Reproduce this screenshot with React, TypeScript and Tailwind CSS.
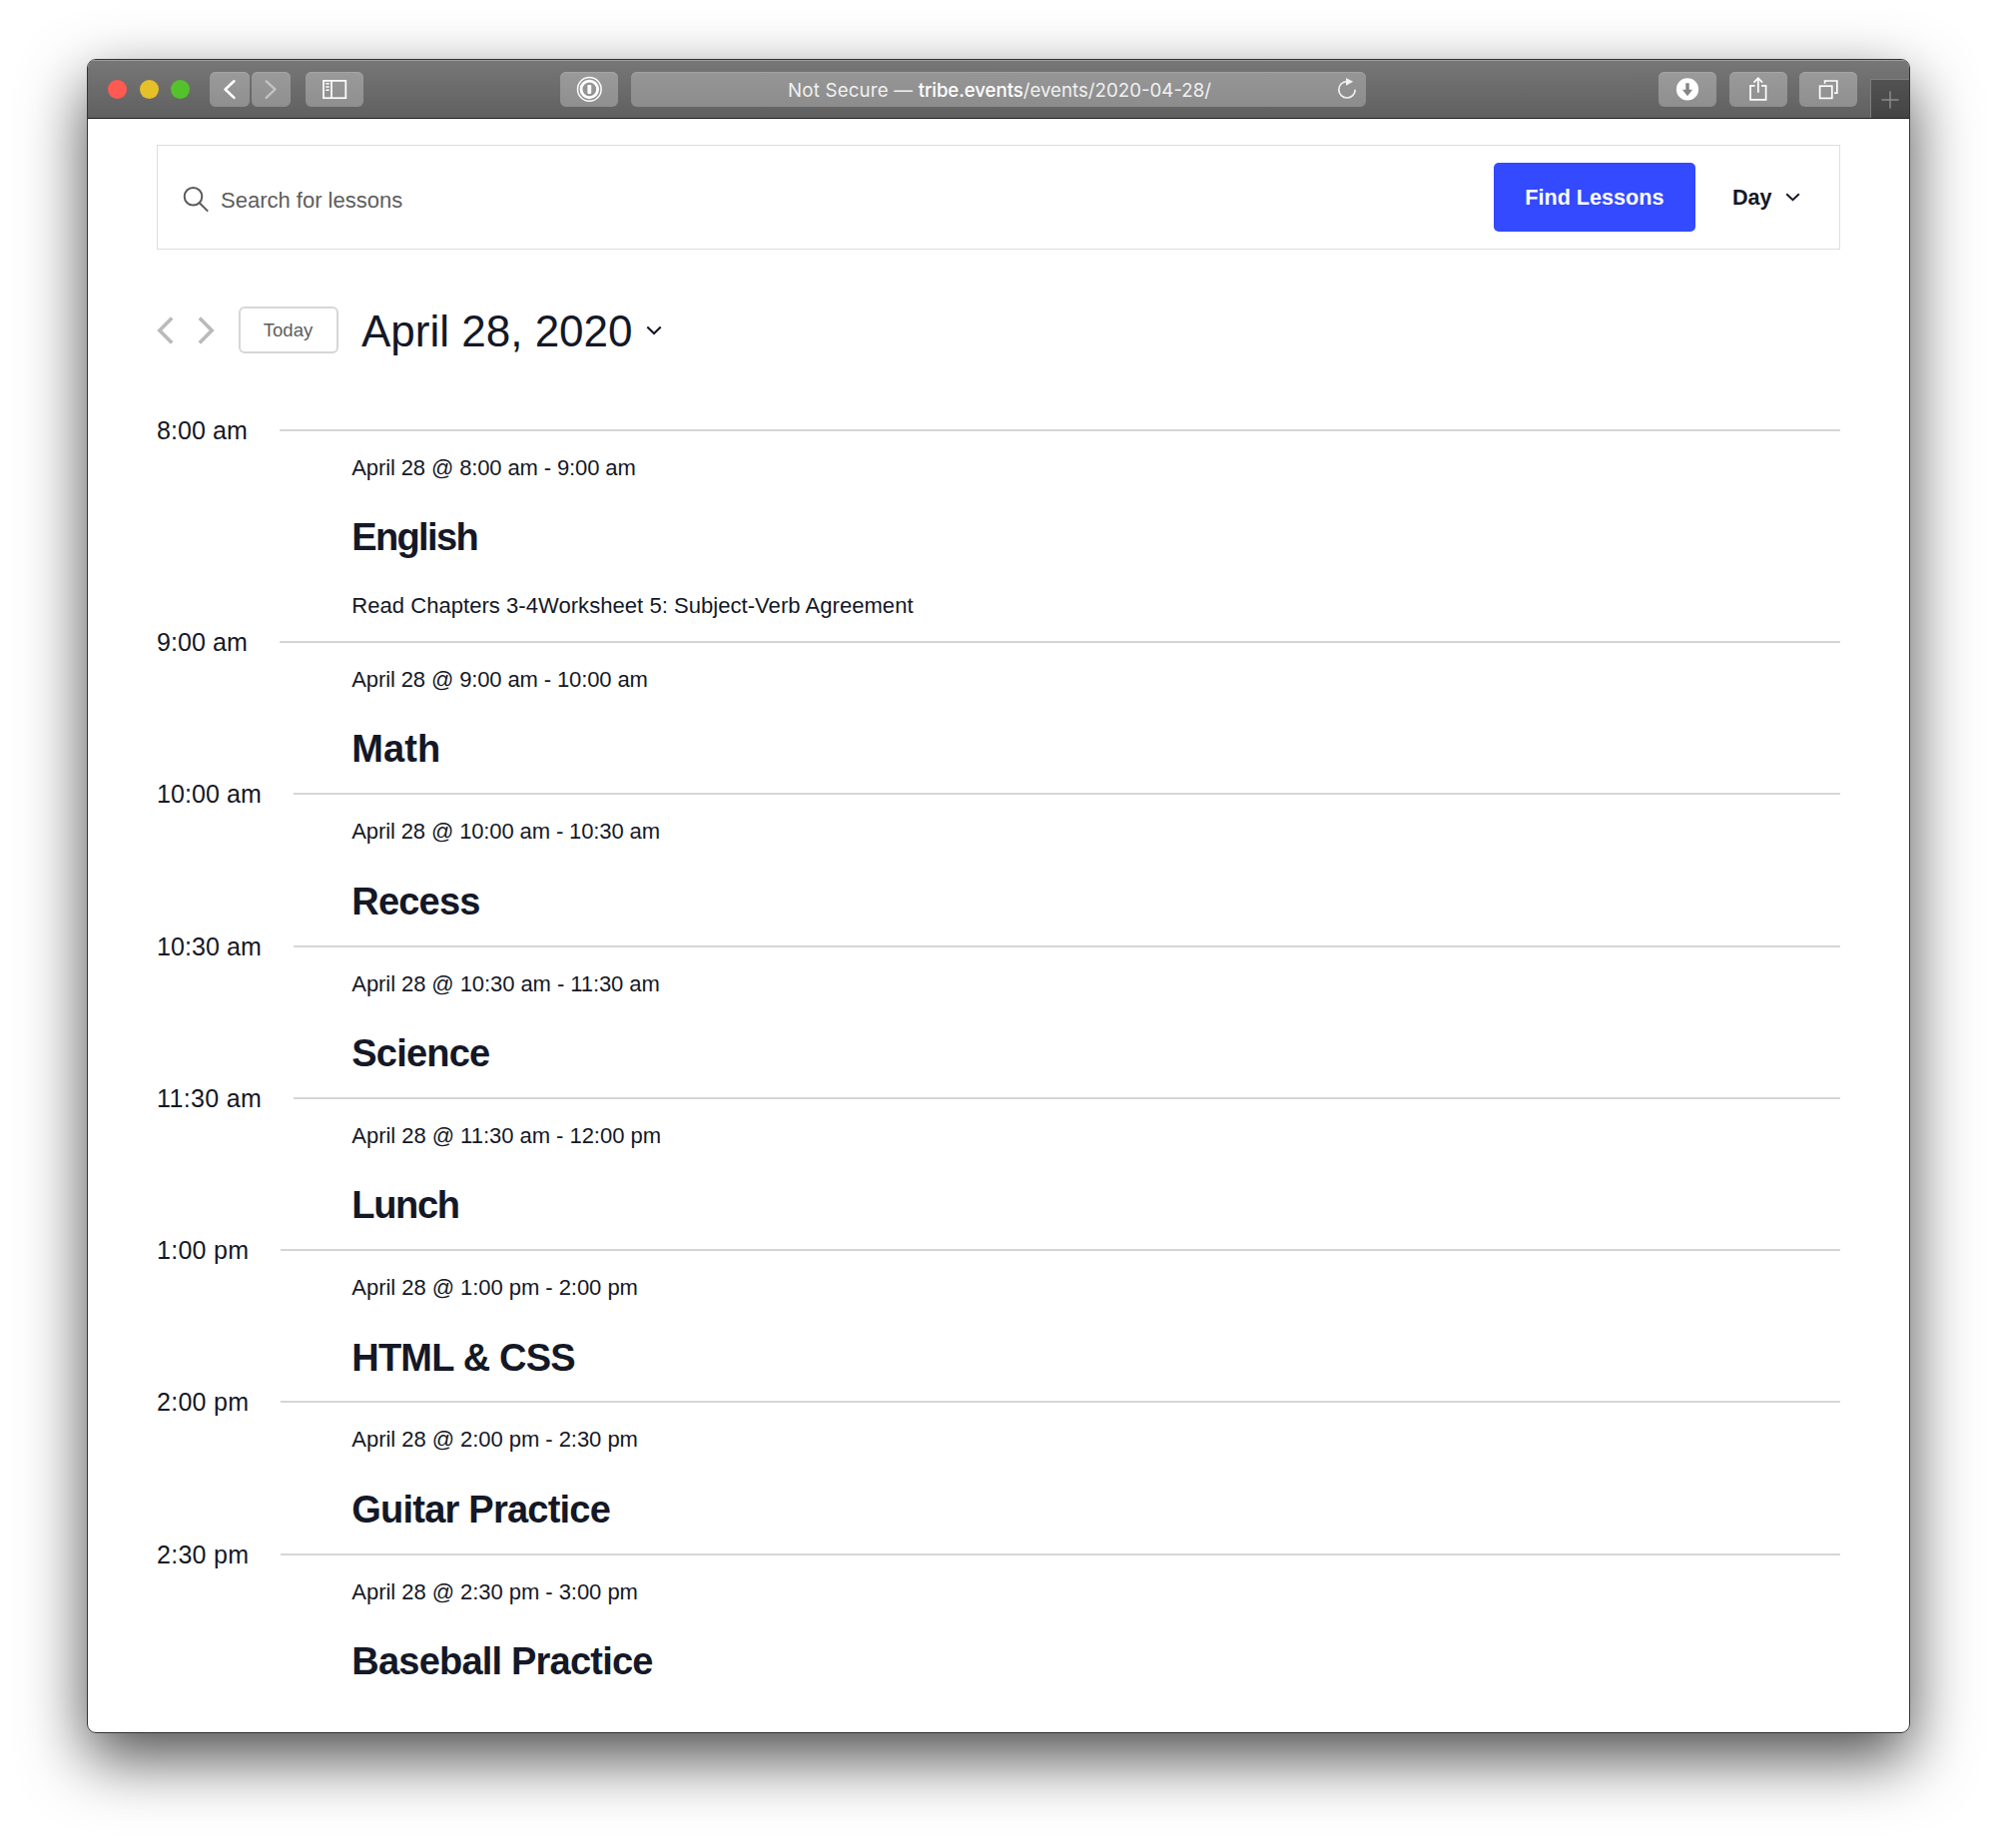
import type { ReactNode } from "react";

type Lesson = {
  hour: string;
  hourClass: string;
  time: string;
  timeClass: string;
  title: string;
  titleClass: string;
  notes?: string;
};

const lessons: Lesson[] = [
  {
    hour: "8:00 am",
    hourClass: "tracking-[0.1px]",
    time: "April 28 @ 8:00 am - 9:00 am",
    timeClass: "tracking-[-0.12px]",
    title: "English",
    titleClass: "tracking-[-1.65px]",
    notes: "Read Chapters 3-4Worksheet 5: Subject-Verb Agreement",
  },
  {
    hour: "9:00 am",
    hourClass: "tracking-[0.1px]",
    time: "April 28 @ 9:00 am - 10:00 am",
    timeClass: "tracking-[-0.12px]",
    title: "Math",
    titleClass: "tracking-[0.1px]",
  },
  {
    hour: "10:00 am",
    hourClass: "tracking-[0.1px]",
    time: "April 28 @ 10:00 am - 10:30 am",
    timeClass: "tracking-[-0.12px]",
    title: "Recess",
    titleClass: "tracking-[-0.8px]",
  },
  {
    hour: "10:30 am",
    hourClass: "tracking-[0.1px]",
    time: "April 28 @ 10:30 am - 11:30 am",
    timeClass: "tracking-[-0.07px]",
    title: "Science",
    titleClass: "tracking-[-0.8px]",
  },
  {
    hour: "11:30 am",
    hourClass: "tracking-[0.35px]",
    time: "April 28 @ 11:30 am - 12:00 pm",
    timeClass: "tracking-[-0.03px]",
    title: "Lunch",
    titleClass: "tracking-[-1.3px]",
  },
  {
    hour: "1:00 pm",
    hourClass: "tracking-[0.27px]",
    time: "April 28 @ 1:00 pm - 2:00 pm",
    timeClass: "tracking-[-0.04px]",
    title: "HTML & CSS",
    titleClass: "tracking-[-0.8px]",
  },
  {
    hour: "2:00 pm",
    hourClass: "tracking-[0.27px]",
    time: "April 28 @ 2:00 pm - 2:30 pm",
    timeClass: "tracking-[-0.04px]",
    title: "Guitar Practice",
    titleClass: "tracking-[-0.77px]",
  },
  {
    hour: "2:30 pm",
    hourClass: "tracking-[0.27px]",
    time: "April 28 @ 2:30 pm - 3:00 pm",
    timeClass: "tracking-[-0.04px]",
    title: "Baseball Practice",
    titleClass: "tracking-[-0.79px]",
  },
];

function ToolButton({ className, children }: { className: string; children: ReactNode }) {
  return (
    <button
      className={`h-[35px] shrink-0 rounded-[6px] bg-linear-to-b from-[#9a9a9a] to-[#8f8f8f] shadow-[inset_0_1px_0_#a5a5a5] ${className}`}
    >
      {children}
    </button>
  );
}

function TitleBar() {
  return (
    <div className="flex h-[59px] items-start border-b border-[#1c1c1c] bg-linear-to-b from-[#777777] to-[#606060] pt-3 pl-5 shadow-[inset_0_1px_0_#9d9d9d]">
      <div className="flex h-[35px] shrink-0 items-center gap-[12.5px]">
        <span className="size-[19px] rounded-full bg-[#ff5a52]" />
        <span className="size-[19px] rounded-full bg-[#e6c029]" />
        <span className="size-[19px] rounded-full bg-[#54c22b]" />
      </div>

      <div className="ml-5 flex shrink-0 gap-[2px]">
        <ToolButton className="w-[39.5px]">
          <svg className="h-[35px] w-[39px]" viewBox="0 0 39 35" fill="none" stroke="#fff" strokeWidth="2.6" strokeLinecap="round" strokeLinejoin="round">
            <path d="M24.4 9.3 15.6 17.5l8.8 8.4" />
          </svg>
        </ToolButton>
        <ToolButton className="w-[39.5px]">
          <svg className="h-[35px] w-[39px]" viewBox="0 0 39 35" fill="none" stroke="#c2c2c2" strokeWidth="2.4" strokeLinecap="round" strokeLinejoin="round">
            <path d="M14.7 9.3 23.5 17.5l-8.8 8.4" />
          </svg>
        </ToolButton>
      </div>

      <ToolButton className="ml-[15px] w-[58px]">
        <svg className="h-[35px] w-[58px]" viewBox="0 0 58 35" fill="none" stroke="#fff" strokeWidth="1.7">
          <rect x="18" y="8.9" width="22.3" height="17.3" />
          <path d="M26 9v17" />
          <path d="M20.3 11.8h3.4M20.3 15h3.4M20.3 18.2h3.4" strokeWidth="1.5" />
        </svg>
      </ToolButton>

      <ToolButton className="ml-[197px] w-[58px]">
        <svg className="h-[35px] w-[58px]" viewBox="0 0 58 35" fill="none" stroke="#fff">
          <circle cx="29.3" cy="17.4" r="11.8" strokeWidth="1.5" />
          <circle cx="29.3" cy="17.4" r="8.3" strokeWidth="2.9" />
          <rect x="27.4" y="12.9" width="3.8" height="9" rx="0.8" fill="#fff" stroke="none" />
        </svg>
      </ToolButton>

      <div className="ml-[13px] flex h-[35px] w-[736px] shrink-0 items-center rounded-[6px] bg-linear-to-b from-[#969696] to-[#8c8c8c] shadow-[inset_0_1px_0_#a3a3a3]">
        <div className="ml-[157px] flex-1 pt-[4px] font-[Inter,sans-serif] text-[18.7px] whitespace-pre text-[#f1f1f1]">
          <span className="tracking-[0.2px]">Not Secure — </span>
          <span className="font-medium tracking-[-0.1px] text-white">tribe.events</span>
          <span>/events/2020-04-28/</span>
        </div>
        <svg className="mr-[7px] h-6 w-6" viewBox="0 0 24 24" fill="none">
          <path d="M20.2 11.8A8.2 8.2 0 1 1 12 3.6" stroke="#f1f1f1" strokeWidth="1.7" />
          <path d="M11 0 18.2 3.8 11 7.8z" fill="#f1f1f1" />
        </svg>
      </div>

      <div className="ml-[293px] flex shrink-0 gap-[12.7px]">
        <ToolButton className="w-[58px]">
          <svg className="h-[35px] w-[58px]" viewBox="0 0 58 35">
            <circle cx="29" cy="17.4" r="11.1" fill="#fff" />
            <path d="M27.3 11.2h3.4v6.6h3.4L29 24.2l-5.1-6.4h3.4z" fill="#858585" />
          </svg>
        </ToolButton>
        <ToolButton className="w-[58px]">
          <svg className="h-[35px] w-[58px]" viewBox="0 0 58 35" fill="none" stroke="#fff" strokeWidth="1.7">
            <path d="M25.6 13.8h-4.6v14h15.6v-14h-4.6" />
            <path d="M28.8 6.2v14.6M24.5 10.6l4.3-4.4 4.3 4.4" />
          </svg>
        </ToolButton>
        <ToolButton className="w-[58px]">
          <svg className="h-[35px] w-[58px]" viewBox="0 0 58 35" fill="none" stroke="#fff" strokeWidth="1.7">
            <rect x="20.6" y="14.2" width="12.2" height="12.2" />
            <path d="M25.6 11.8V9h12.2v12.2h-2.7" />
          </svg>
        </ToolButton>
      </div>

      <div className="ml-auto flex h-[39px] w-[39px] shrink-0 items-center justify-center self-end border-t border-l border-[#7f7f7f] bg-linear-to-b from-[#525252] to-[#444444] pt-px">
        <svg className="h-[18px] w-[18px]" viewBox="0 0 18 18" stroke="#8d8d8d" strokeWidth="1.5">
          <path d="M9 0.5v17M0.5 9h17" />
        </svg>
      </div>
    </div>
  );
}

function SearchBar() {
  return (
    <div className="flex h-[105px] items-center border border-[#dedede]">
      <div className="flex flex-1 items-center pt-[5px] pl-[25px] text-[22px] text-[#5d5d5d]">
        <svg className="h-[26px] w-[26px]" viewBox="0 0 26 26" fill="none" stroke="#5a5a5a" strokeWidth="2">
          <circle cx="10.5" cy="9.8" r="8.8" />
          <path d="m16.8 16.2 8.4 8.4" />
        </svg>
        <span className="ml-3">Search for lessons</span>
      </div>
      <button className="h-[69px] w-[202px] rounded-[5px] bg-[#334aff] pt-px text-[21.6px] font-bold text-white">
        Find Lessons
      </button>
      <div className="mr-[39px] ml-[37px] flex items-center pt-px text-[21.6px] font-bold text-[#141827]">
        <span>Day</span>
        <svg className="ml-[13.5px] h-[9px] w-[15px]" viewBox="0 0 15 9" fill="none" stroke="#141827" strokeWidth="2">
          <path d="m1.2 1.2 6.3 6 6.3-6" />
        </svg>
      </div>
    </div>
  );
}

function DateNav() {
  return (
    <div className="mt-[57px] flex h-[47px] items-center">
      <svg className="h-[28px] w-[17px]" viewBox="0 0 17 28" fill="none" stroke="#bababa" strokeWidth="3.6">
        <path d="M15.2 1.5 2.8 14l12.4 12.5" />
      </svg>
      <svg className="ml-6 h-[28px] w-[17px]" viewBox="0 0 17 28" fill="none" stroke="#bababa" strokeWidth="3.6">
        <path d="M1.8 1.5 14.2 14 1.8 26.5" />
      </svg>
      <button className="ml-[23.5px] h-[47px] w-[100px] rounded-[6px] border-2 border-[#d6d6d6] text-[18.5px] text-[#5d5d5d]">
        Today
      </button>
      <h1 className="ml-[23.5px] pt-[3px] text-[44px] leading-[46px] text-[#141827]">April 28, 2020</h1>
      <svg className="ml-[13px] h-[10px] w-[16px]" viewBox="0 0 16 10" fill="none" stroke="#141827" strokeWidth="2.1">
        <path d="m1.3 1.5 6.7 6.6 6.7-6.6" />
      </svg>
    </div>
  );
}

function LessonRow({ lesson }: { lesson: Lesson }) {
  return (
    <li className={lesson.notes ? "h-[212px]" : "h-[152.3px]"}>
      <div className="flex h-[30px] items-center">
        <span className={`text-[25px] leading-[30px] ${lesson.hourClass}`}>{lesson.hour}</span>
        <span className="ml-[31.5px] h-[2px] flex-1 bg-[#d5d5d5]" />
      </div>
      <div className="pt-[9px] pl-[195.3px]">
        <p className={`text-[22px] leading-[28px] ${lesson.timeClass}`}>{lesson.time}</p>
        <h2 className={`mt-[31.4px] text-[38px] leading-[48px] font-bold ${lesson.titleClass}`}>{lesson.title}</h2>
        {lesson.notes && <p className="mt-[30.6px] text-[22px] leading-[28px] tracking-[0.05px]">{lesson.notes}</p>}
      </div>
    </li>
  );
}

export default function App() {
  return (
    <div className="h-[1851px] w-[2000px] overflow-hidden bg-white pt-[59px] pl-[87px] font-['Liberation_Sans',Arial,sans-serif]">
      <div className="h-[1677px] w-[1826px] rounded-[9px] shadow-[0_25px_64px_rgba(0,0,0,0.7)]">
        <div className="h-full overflow-hidden rounded-[9px] border border-[#333333] bg-white">
          <TitleBar />
          <main className="px-[69px] pt-[26px]">
            <SearchBar />
            <DateNav />
            <ul className="mt-[62px] text-[#141827]">
              {lessons.map((lesson) => (
                <LessonRow key={lesson.hour} lesson={lesson} />
              ))}
            </ul>
          </main>
        </div>
      </div>
    </div>
  );
}
